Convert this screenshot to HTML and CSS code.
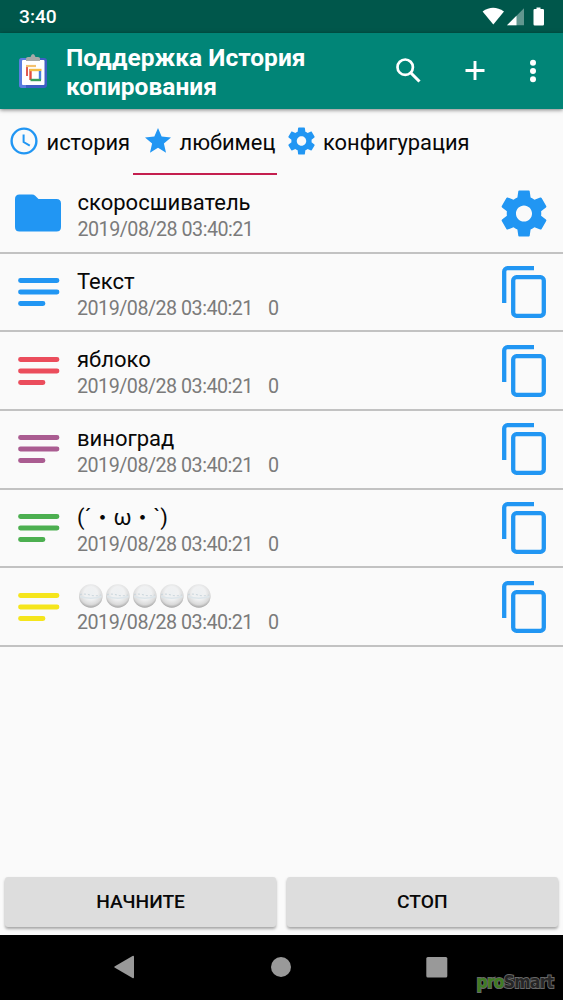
FILE: index.html
```
<!DOCTYPE html>
<html lang="ru">
<head>
<meta charset="utf-8">
<title>История копирования</title>
<link rel="stylesheet" href="styles.css">
</head>
<body>
<svg class="defs" width="0" height="0">
  <defs>
    <radialGradient id="pearl" cx="50%" cy="38%" r="62%">
      <stop offset="0" stop-color="#edf0f2"/><stop offset=".45" stop-color="#f0f1f2"/>
      <stop offset=".78" stop-color="#dadada"/><stop offset="1" stop-color="#a2a2a2"/>
    </radialGradient>
    <symbol id="gear" viewBox="2 2 20 20"><path d="M19.43 12.98c.04-.32.07-.64.07-.98s-.03-.66-.07-.98l2.110-1.650c.19-.15.24-.42.12-.64l-2-3.460c-.12-.22-.39-.3-.61-.22l-2.490 1c-.52-.4-1.080-.73-1.690-.98l-.38-2.650C14.460 2.180 14.250 2 14 2h-4c-.25 0-.46.18-.49.42l-.38 2.650c-.61.25-1.170.59-1.690.98l-2.490-1c-.23-.09-.49 0-.61.22l-2 3.460c-.13.22-.07.49.12.64l2.110 1.650c-.04.32-.07.65-.07.98s.03.66.07.98l-2.110 1.650c-.19.15-.24.42-.12.64l2 3.460c.12.22.39.3.61.22l2.490-1c.52.4 1.080.73 1.690.98l.38 2.650c.03.24.24.42.49.42h4c.25 0 .46-.18.49-.42l.38-2.650c.61-.25 1.170-.59 1.690-.98l2.490 1c.23.09.49 0 .61-.22l2-3.460c.12-.22.07-.49-.12-.64l-2.110-1.650zM12 15.500c-1.930 0-3.500-1.570-3.500-3.500s1.570-3.500 3.500-3.500 3.500 1.570 3.500 3.500-1.570 3.500-3.500 3.500z"/></symbol>
    <symbol id="copy" viewBox="0 0 44 52"><path d="M2.200 37V5.500a3.300 3.300 0 0 1 3.300-3.300H32M14.500 11.200h24a3.300 3.300 0 0 1 3.300 3.300v32a3.300 3.300 0 0 1-3.300 3.300h-24a3.300 3.300 0 0 1-3.300-3.300v-32a3.300 3.300 0 0 1 3.300-3.300z" fill="none" stroke="currentColor" stroke-width="4.300"/></symbol>
    <symbol id="lines" viewBox="0 0 42 30"><path d="M2.500 3.500h36.500M2.500 15h36.500M2.500 26.500h22.500" stroke="currentColor" stroke-width="4.800" stroke-linecap="round"/></symbol>
    <symbol id="ball" viewBox="0 0 27 24"><circle cx="13.800" cy="12" r="11.800" fill="url(#pearl)"/><path d="M3 10.500q5-1 10 .5t11 0" fill="none" stroke="#c9d5dc" stroke-width="1" stroke-dasharray="2 2"/><path d="M3 12.500q11 3.500 21.500 0" fill="none" stroke="#dce5ea" stroke-width="1.500"/></symbol>
  </defs>
</svg>
<div class="screen">
  <div class="status">
    <span class="time">3:40</span>
    <svg width="63" height="20" viewBox="0 0 63 20" fill="#fff">
      <path d="M.6 4.500Q11 -3 22 4.500L11.300 17.500z"/>
      <path d="M42 1.200v17H25z" opacity=".38"/><path d="M34.500 8.700v9.500H25z"/>
      <path d="M54.500 .5h4v1.500h2.300q1.200 0 1.200 1.200v14.100q0 1.200-1.200 1.200h-8.100q-1.200 0-1.200-1.200V3.200q0-1.200 1.200-1.200h1.800z"/>
    </svg>
  </div>
  <header class="toolbar">
    <svg class="app-icon" width="30" height="36" viewBox="0 0 30 36">
      <rect x="1" y="4" width="28" height="30" rx="3" fill="#3f5fc4"/>
      <path d="M1 14V7q0-3 3-3h4v30H4q-3 0-3-3z" fill="#5a7de0"/>
      <rect x="4" y="6" width="22.500" height="25" rx="1" fill="#fff"/>
      <path d="M8 7V4.500q0-1.500 2-1.500h2.500q1-3 2.500-3t2.500 3H20q2 0 2 1.500V7z" fill="#a7aaa9"/>
      <path d="M9 22V12.500" stroke="#e05a50" stroke-width="2"/><path d="M8 12h10" stroke="#f3c16e" stroke-width="2.200"/>
      <path d="M12.500 15v11" stroke="#e34e3e" stroke-width="2.400"/><path d="M11.500 16h12" stroke="#f4bd45" stroke-width="2.400"/>
      <path d="M22 17v9" stroke="#4a80dc" stroke-width="2.400"/><path d="M12.500 26h10.500" stroke="#37a05a" stroke-width="2.400"/>
    </svg>
    <h1>Поддержка История<br>копирования</h1>
    <svg class="actions" width="145" height="30" viewBox="0 0 145 30" fill="none" stroke="#fff">
      <circle cx="9.200" cy="11.200" r="7.700" stroke-width="2.700"/><path d="M15 17l8.500 8.500" stroke-width="3.100"/>
      <path d="M69.500 14.500h19M79 5v19" stroke-width="2.900"/>
      <g fill="#fff" stroke="none"><circle cx="137" cy="6.800" r="3"/><circle cx="137" cy="15" r="3"/><circle cx="137" cy="23.200" r="3"/></g>
    </svg>
  </header>
  <nav class="tabs">
    <div class="tab history"><svg width="28" height="28" viewBox="0 0 28 28" fill="none" stroke="#2196f3"><circle cx="14" cy="14" r="12.400" stroke-width="2.400"/><path d="M13.600 7.500v7.500l6.200 3.600" stroke-width="2"/></svg><span>история</span></div>
    <div class="tab favorite"><svg width="26" height="26" viewBox="2 2 20 20" fill="#2196f3"><path d="M12 17.270L18.180 21l-1.640-7.030L22 9.240l-7.190-.61L12 2 9.190 8.630 2 9.240l5.460 4.730L5.820 21z"/></svg><span>любимец</span></div>
    <div class="tab config"><svg width="27" height="28" fill="#2196f3"><use href="#gear"/></svg><span>конфигурация</span></div>
  </nav>
  <main>
    <div class="row folder"><svg class="mark" width="46" height="38" viewBox="0 0 46 38" fill="#2196f3"><path d="M4.500 .5H17q2 0 3.200 1.200L23.500 5H41.500Q46 5 46 9.500V33q0 4.500-4.500 4.500h-37Q0 37.500 0 33V5Q0 .5 4.500 .5z"/></svg><div class="info"><div class="name">скоросшиватель</div><div class="date">2019/08/28 03:40:21</div></div><svg class="gear" width="46" height="47" fill="#2196f3"><use href="#gear"/></svg></div>
    <div class="row blue"><svg class="mark" width="42" height="30"><use href="#lines"/></svg><div class="info"><div class="name">Текст</div><div class="date">2019/08/28 03:40:21<span>0</span></div></div><svg class="copy" width="44" height="52"><use href="#copy"/></svg></div>
    <div class="row red"><svg class="mark" width="42" height="30"><use href="#lines"/></svg><div class="info"><div class="name">яблоко</div><div class="date">2019/08/28 03:40:21<span>0</span></div></div><svg class="copy" width="44" height="52"><use href="#copy"/></svg></div>
    <div class="row purple"><svg class="mark" width="42" height="30"><use href="#lines"/></svg><div class="info"><div class="name">виноград</div><div class="date">2019/08/28 03:40:21<span>0</span></div></div><svg class="copy" width="44" height="52"><use href="#copy"/></svg></div>
    <div class="row green"><svg class="mark" width="42" height="30"><use href="#lines"/></svg><div class="info"><div class="name face">(´・ω・`)</div><div class="date">2019/08/28 03:40:21<span>0</span></div></div><svg class="copy" width="44" height="52"><use href="#copy"/></svg></div>
    <div class="row yellow"><svg class="mark" width="42" height="30"><use href="#lines"/></svg><div class="info"><div class="name balls"><svg width="27" height="24"><use href="#ball"/></svg><svg width="27" height="24"><use href="#ball"/></svg><svg width="27" height="24"><use href="#ball"/></svg><svg width="27" height="24"><use href="#ball"/></svg><svg width="27" height="24"><use href="#ball"/></svg></div><div class="date">2019/08/28 03:40:21<span>0</span></div></div><svg class="copy" width="44" height="52"><use href="#copy"/></svg></div>
  </main>
  <div class="buttons"><button>НАЧНИТЕ</button><button>СТОП</button></div>
  <footer class="navbar">
    <svg width="334" height="24" viewBox="0 0 334 24" fill="#999"><path d="M.5 11.500Q0 12 .5 12.500L18.500 23q1.500 .8 1.500-1V2q0-1.800-1.500-1z"/><circle cx="167" cy="12" r="10"/><rect x="312.300" y="2" width="21" height="20.500" rx="1.500"/></svg>
    <div class="brand"><span>pro</span>Smart</div>
  </footer>
</div>
</body>
</html>
```
FILE: styles.css
```
* { box-sizing: border-box; }
body { margin: 0; background: #fafafa; font-family: Roboto, "Noto Sans CJK JP", sans-serif; color: #080808; }
svg { display: block; flex: none; }
.defs { position: absolute; }
.screen { width: 563px; height: 1000px; display: flex; flex-direction: column; overflow: hidden; }
.status { height: 33px; flex: none; background: #00574b; color: #fff; display: flex; justify-content: space-between; align-items: flex-start; padding: 7px 19px 0 19px; }
.status svg { margin-right: 0; margin-left: auto; transform: none; }
.status { padding-right: 18px; }
.time { font-size: 19.200px; line-height: 20px; font-weight: 500; }
.toolbar { height: 76px; flex: none; background: #018577; box-shadow: 0 1px 4px rgba(0,0,0,.5); display: flex; align-items: center; padding: 0 22px 0 18px; color: #fff; }
h1 { margin: 1px 0 0 18px; font-size: 24.500px; line-height: 29px; font-weight: 700; white-space: nowrap; }
.app-icon { margin-top: 1px; }
.actions { margin-left: auto; }
.tabs { height: 66px; flex: none; display: flex; font-size: 21.900px; line-height: 28px; }
.tab { display: flex; align-items: center; white-space: nowrap; padding-bottom: 2px; }
.tab span { padding-top: 3px; }
.history { width: 132.500px; padding-left: 10px; gap: 8.500px; }
.favorite { width: 144.500px; padding-left: 12px; gap: 9px; border-bottom: 2.500px solid #c41e4e; padding-bottom: 0; }
.config { padding-left: 11px; gap: 8px; }
.row { height: 78.700px; display: flex; align-items: center; border-bottom: 2px solid #c2c2c2; padding: 0 17.500px 0 17.500px; }
.mark { margin-right: 17.500px; }
.folder .mark { margin: 0 16.500px 0 -2.500px; }
.info { flex: 1; padding-top: 6px; }
.name { font-size: 22px; line-height: 26px; height: 26px; white-space: nowrap; color: #080808; }
.date { font-size: 19.700px; line-height: 27px; letter-spacing: -.51px; color: #7b7b7b; white-space: nowrap; }
.date span { margin-left: 15px; }
.balls { display: flex; align-items: center; }
.gear { margin-right: -1px; }
.copy { color: #2196f3; }
.blue { color: #2196f3; }
.red { color: #eb4d5c; }
.purple { color: #aa5c91; }
.green { color: #4caf50; }
.yellow { color: #f5e51b; }
.buttons { margin-top: auto; display: grid; grid-template-columns: 1fr 1fr; gap: 10.500px; padding: 0 5px 8px; }
button { height: 50px; border: 0; border-radius: 3px; background: #dddddd; box-shadow: 0 2px 3px rgba(0,0,0,.34); font: 500 19.200px/24px Roboto, sans-serif; color: #080808; padding: 0; }
.navbar { position: relative; height: 65px; flex: none; background: #000; display: flex; padding: 20px 0 0 114px; }
.brand { position: absolute; right: 10px; bottom: 8px; font: 700 18px/21px "DejaVu Sans", sans-serif; letter-spacing: -.9px; color: #252525; -webkit-text-stroke: 2px #686868; paint-order: stroke fill; transform: scaleX(.87); transform-origin: right; }
.brand span { color: #3f7b22; }
```
